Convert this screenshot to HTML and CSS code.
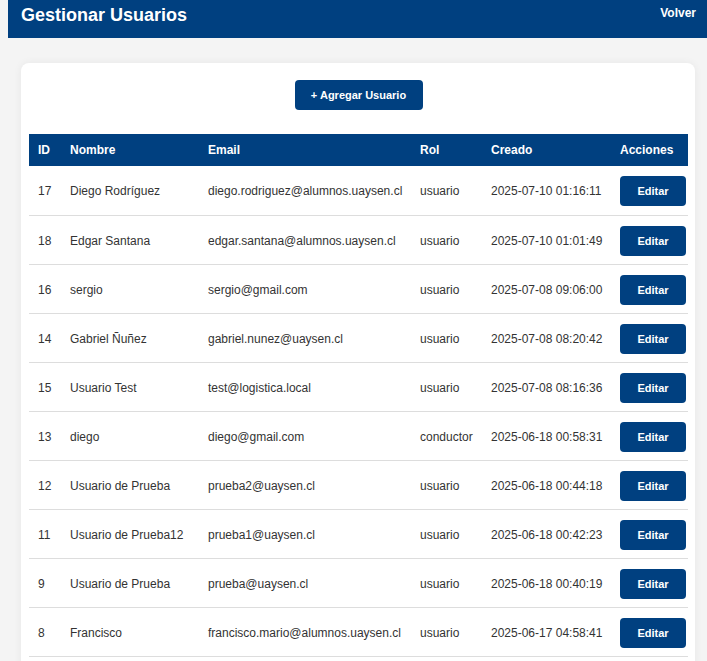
FILE: index.html
```html
<!DOCTYPE html>
<html lang="es">
<head>
<meta charset="utf-8">
<title>Gestionar Usuarios</title>
<link rel="stylesheet" href="styles.css">
</head>
<body>
<header class="topbar">
  <h1 class="title">Gestionar Usuarios</h1>
  <a class="back" href="#">Volver</a>
</header>
<main class="wrap">
  <section class="card">
    <div class="actions-top">
      <button class="btn btn-add">+ Agregar Usuario</button>
    </div>
    <table class="users">
      <colgroup>
        <col class="c-id"><col class="c-name"><col class="c-email"><col class="c-rol"><col class="c-date"><col class="c-act">
      </colgroup>
      <thead>
        <tr><th>ID</th><th>Nombre</th><th>Email</th><th>Rol</th><th>Creado</th><th>Acciones</th></tr>
      </thead>
      <tbody>
        <tr><td>17</td><td>Diego Rodríguez</td><td>diego.rodriguez@alumnos.uaysen.cl</td><td>usuario</td><td>2025-07-10 01:16:11</td><td><button class="btn btn-edit">Editar</button></td></tr>
        <tr><td>18</td><td>Edgar Santana</td><td>edgar.santana@alumnos.uaysen.cl</td><td>usuario</td><td>2025-07-10 01:01:49</td><td><button class="btn btn-edit">Editar</button></td></tr>
        <tr><td>16</td><td>sergio</td><td>sergio@gmail.com</td><td>usuario</td><td>2025-07-08 09:06:00</td><td><button class="btn btn-edit">Editar</button></td></tr>
        <tr><td>14</td><td>Gabriel Ñuñez</td><td>gabriel.nunez@uaysen.cl</td><td>usuario</td><td>2025-07-08 08:20:42</td><td><button class="btn btn-edit">Editar</button></td></tr>
        <tr><td>15</td><td>Usuario Test</td><td>test@logistica.local</td><td>usuario</td><td>2025-07-08 08:16:36</td><td><button class="btn btn-edit">Editar</button></td></tr>
        <tr><td>13</td><td>diego</td><td>diego@gmail.com</td><td>conductor</td><td>2025-06-18 00:58:31</td><td><button class="btn btn-edit">Editar</button></td></tr>
        <tr><td>12</td><td>Usuario de Prueba</td><td>prueba2@uaysen.cl</td><td>usuario</td><td>2025-06-18 00:44:18</td><td><button class="btn btn-edit">Editar</button></td></tr>
        <tr><td>11</td><td>Usuario de Prueba12</td><td>prueba1@uaysen.cl</td><td>usuario</td><td>2025-06-18 00:42:23</td><td><button class="btn btn-edit">Editar</button></td></tr>
        <tr><td>9</td><td>Usuario de Prueba</td><td>prueba@uaysen.cl</td><td>usuario</td><td>2025-06-18 00:40:19</td><td><button class="btn btn-edit">Editar</button></td></tr>
        <tr><td>8</td><td>Francisco</td><td>francisco.mario@alumnos.uaysen.cl</td><td>usuario</td><td>2025-06-17 04:58:41</td><td><button class="btn btn-edit">Editar</button></td></tr>
      </tbody>
    </table>
  </section>
</main>
</body>
</html>
```
FILE: styles.css
```css
* { box-sizing: border-box; }
html, body { margin: 0; padding: 0; }
body {
  background: #f4f4f4;
  font-family: "Liberation Sans", Arial, sans-serif;
  color: #333;
  font-size: 12px;
}
.topbar {
  margin-left: 8px;
  height: 38px;
  background: #004080;
  color: #fff;
  display: flex;
  justify-content: space-between;
  align-items: flex-start;
  padding: 5px 11px 0 13px;
}
.title {
  margin: 0;
  font-size: 18px;
  font-weight: bold;
  line-height: 21px;
}
.back {
  color: #fff;
  text-decoration: none;
  font-weight: bold;
  font-size: 12px;
  line-height: 16px;
  margin-top: 0;
}
.wrap {
  padding: 25px 12px 0 21px;
}
.card {
  background: #fff;
  border-radius: 8px;
  box-shadow: 0 0 8px rgba(0,0,0,0.06);
  padding: 17px 7px 20px 8px;
}
.actions-top {
  display: flex;
  justify-content: center;
  margin-bottom: 24px;
}
.btn {
  background: #004080;
  color: #fff;
  border: none;
  border-radius: 4px;
  font-family: "Liberation Sans", Arial, sans-serif;
  font-weight: bold;
  font-size: 11px;
  cursor: pointer;
  padding: 0;
}
.btn-add {
  width: 128px;
  height: 30px;
}
.btn-edit {
  width: 66px;
  height: 30px;
  display: block;
}
.users {
  width: 659px;
  border-collapse: collapse;
  table-layout: fixed;
}
.c-id { width: 31px; }
.c-name { width: 138px; }
.c-email { width: 212px; }
.c-rol { width: 71px; }
.c-date { width: 129px; }
.c-act { width: 78px; }
.users th {
  background: #004080;
  color: #fff;
  font-weight: bold;
  text-align: left;
  height: 32px;
  padding: 0 0 0 10px;
  font-size: 12px;
}
.users th:first-child, .users td:first-child { padding-left: 9px; }
.users td {
  height: 49px;
  padding: 2px 0 0 10px;
  border-bottom: 1px solid #ddd;
  vertical-align: middle;
  white-space: nowrap;
}
```
